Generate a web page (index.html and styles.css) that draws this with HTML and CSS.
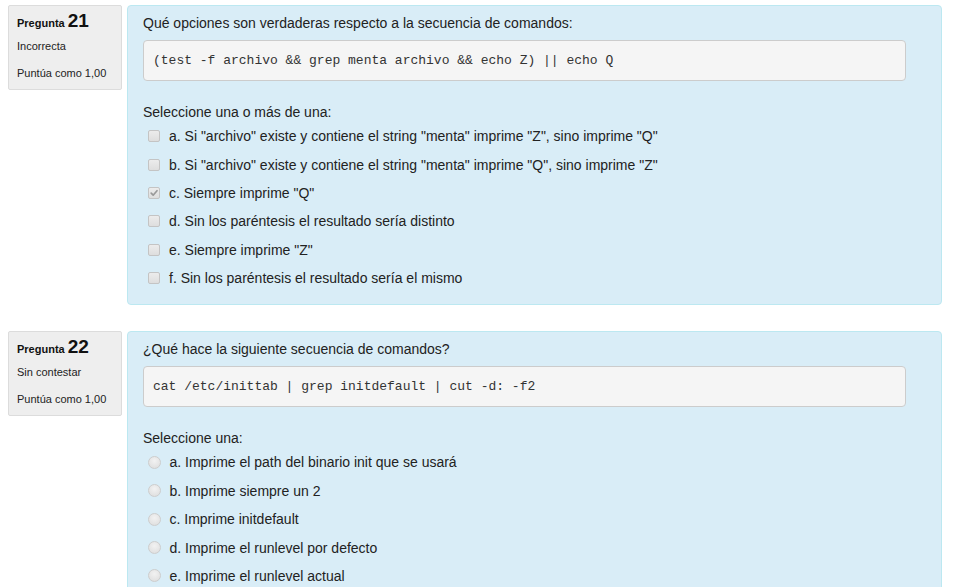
FILE: index.html
```html
<!DOCTYPE html>
<html lang="es">
<head>
<meta charset="utf-8">
<title>Preguntas</title>
<link rel="stylesheet" href="styles.css">
</head>
<body>
<div class="page">
  <div class="que">
    <div class="info">
      <h3 class="no">Pregunta <span class="qno">21</span></h3>
      <div class="state">Incorrecta</div>
      <div class="grade">Puntúa como 1,00</div>
    </div>
    <div class="content">
      <div class="qtext">Qué opciones son verdaderas respecto a la secuencia de comandos:</div>
      <pre class="code">(test -f archivo &amp;&amp; grep menta archivo &amp;&amp; echo Z) || echo Q</pre>
      <div class="prompt">Seleccione una o más de una:</div>
      <div class="answer">
        <div class="opt"><span class="cb"></span><span>a. Si "archivo" existe y contiene el string "menta" imprime "Z", sino imprime "Q"</span></div>
        <div class="opt"><span class="cb"></span><span>b. Si "archivo" existe y contiene el string "menta" imprime "Q", sino imprime "Z"</span></div>
        <div class="opt"><span class="cb checked"><svg viewBox="0 0 12 12" width="12" height="12"><path d="M2.6 6.2 L5 8.6 L9.6 3.2" fill="none" stroke="#999" stroke-width="2" stroke-linecap="round" stroke-linejoin="round"/></svg></span><span>c. Siempre imprime "Q"</span></div>
        <div class="opt"><span class="cb"></span><span>d. Sin los paréntesis el resultado sería distinto</span></div>
        <div class="opt"><span class="cb"></span><span>e. Siempre imprime "Z"</span></div>
        <div class="opt"><span class="cb"></span><span>f. Sin los paréntesis el resultado sería el mismo</span></div>
      </div>
    </div>
  </div>

  <div class="que">
    <div class="info">
      <h3 class="no">Pregunta <span class="qno">22</span></h3>
      <div class="state">Sin contestar</div>
      <div class="grade">Puntúa como 1,00</div>
    </div>
    <div class="content">
      <div class="qtext">¿Qué hace la siguiente secuencia de comandos?</div>
      <pre class="code">cat /etc/inittab | grep initdefault | cut -d: -f2</pre>
      <div class="prompt">Seleccione una:</div>
      <div class="answer">
        <div class="opt"><span class="rb"></span><span>a. Imprime el path del binario init que se usará</span></div>
        <div class="opt"><span class="rb"></span><span>b. Imprime siempre un 2</span></div>
        <div class="opt"><span class="rb"></span><span>c. Imprime initdefault</span></div>
        <div class="opt"><span class="rb"></span><span>d. Imprime el runlevel por defecto</span></div>
        <div class="opt"><span class="rb"></span><span>e. Imprime el runlevel actual</span></div>
      </div>
    </div>
  </div>
</div>
</body>
</html>
```

FILE: styles.css
```css
* { box-sizing: border-box; }
html, body { margin: 0; padding: 0; background: #fff; }
body {
  font-family: "Liberation Sans", Arial, sans-serif;
  font-size: 14px;
  line-height: 20px;
  color: #333;
  overflow: hidden;
}
.page {
  padding: 5px 17px 0 8px;
}
.que {
  display: flex;
  gap: 5px;
  align-items: flex-start;
  margin-bottom: 26px;
}
.info {
  width: 114px;
  flex: none;
  background: #eee;
  border: 1px solid #dcdcdc;
  border-radius: 2px;
  padding: 5px 8px 9px 8px;
  font-size: 11px;
  line-height: 14px;
  color: #222;
}
.no {
  margin: 0;
  font-size: 11px;
  font-weight: bold;
  line-height: 20px;
  color: #111;
}
.qno {
  font-size: 19px;
}
.state { margin-top: 6px; }
.grade { margin-top: 13px; }
.content {
  flex: 1;
  background: #d9edf7;
  border: 1px solid #bce8f1;
  border-radius: 4px;
  padding: 7px 15px 12px 15px;
  color: #222;
}
.qtext {
  line-height: 20px;
}
.code {
  margin: 7px 20px 0 0;
  padding: 9.5px 9px;
  background: #f5f5f5;
  border: 1px solid #ccc;
  border-radius: 4px;
  font-family: "Liberation Mono", "DejaVu Sans Mono", monospace;
  font-size: 13px;
  line-height: 20px;
  color: #333;
  white-space: pre;
}
.prompt {
  margin-top: 21px;
}
.opt {
  display: flex;
  align-items: center;
  padding: 4.2px 0 4.2px 5px;
  line-height: 20px;
}
.cb {
  width: 12px;
  height: 12px;
  flex: none;
  margin-right: 9px;
  border: 1px solid #c4c4c4;
  border-radius: 2px;
  background: linear-gradient(#ececec, #dedede);
  display: flex;
  align-items: center;
  justify-content: center;
}
.cb svg { display: block; }
.rb {
  width: 13px;
  height: 13px;
  flex: none;
  margin-right: 9px;
  margin-left: -0.5px;
  border: 1px solid #cdcdcd;
  border-radius: 50%;
  background: radial-gradient(circle at 50% 35%, #f2f2f2, #dcdcdc);
}
```
